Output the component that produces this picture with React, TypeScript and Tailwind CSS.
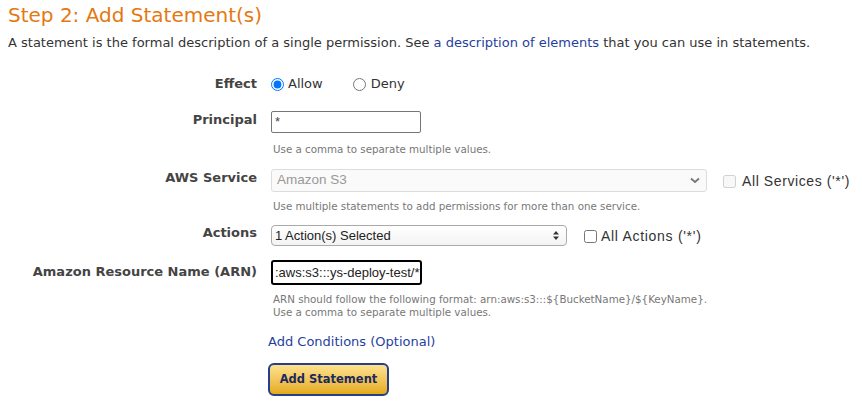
import React from "react";

const verdana = { fontFamily: '"DejaVu Sans", Verdana, sans-serif' };
const arial = { fontFamily: '"Liberation Sans", Arial, sans-serif' };

function Label({ children, pt = "" }: { children: React.ReactNode; pt?: string }) {
  return (
    <div className={`w-[249px] shrink-0 text-right text-[13px] leading-[16px] font-bold text-[#444] ${pt}`}>
      {children}
    </div>
  );
}

function Help({ children, mt }: { children: React.ReactNode; mt: string }) {
  return <div className={`pl-[265px] text-[10.3px] leading-[13px] text-[#777] ${mt}`}>{children}</div>;
}

export default function App() {
  return (
    <div className="bg-white w-[862px] h-[406px] overflow-hidden pl-[8px] text-[#333]" style={verdana}>
      {/* Header */}
      <h2 className="mt-[3px] text-[20px] leading-[24px] text-[#e47911]">Step 2: Add Statement(s)</h2>
      <p className="mt-[8px] text-[13px] leading-[16px] whitespace-nowrap">
        A statement is the formal description of a single permission. See{" "}
        <a className="text-[#1f3fa0]">a description of elements</a> that you can use in statements.
      </p>

      {/* Effect */}
      <div className="mt-[23px] flex items-center h-[20px]">
        <Label>Effect</Label>
        <div className="ml-[14px] flex items-center text-[13px]">
          <input type="radio" name="effect" defaultChecked className="m-0 w-[13px] h-[13px]" />
          <span className="ml-[4px]">Allow</span>
          <input type="radio" name="effect" className="m-0 ml-[30px] w-[13px] h-[13px]" />
          <span className="ml-[5px]">Deny</span>
        </div>
      </div>

      {/* Principal */}
      <div className="mt-[17px] flex items-start">
        <Label pt="pt-[1px]">Principal</Label>
        <div className="ml-[14px] w-[150px] h-[22px] border border-[#767676] rounded-[2px] px-[3px] text-[13px] leading-[20px] text-[#444]" style={arial}>
          *
        </div>
      </div>
      <Help mt="mt-[10px]">Use a comma to separate multiple values.</Help>

      {/* AWS Service */}
      <div className="mt-[13px] flex items-start">
        <Label pt="pt-[1px]">AWS Service</Label>
        <div className="ml-[14px] w-[436px] h-[23px] border border-[#ddd] rounded-[3px] bg-[#fafafa] pl-[5px] pr-[6px] flex items-center justify-between text-[13.5px] text-[#999]" style={arial}>
          <span>Amazon S3</span>
          <svg width="10" height="7" viewBox="0 0 10 7">
            <path d="M1 1.5 L5 5 L9 1.5" fill="none" stroke="#777" strokeWidth="1.8" />
          </svg>
        </div>
        <div className="ml-[16px] flex items-center h-[24px] text-[14px] tracking-[0.6px] text-[#333]" style={arial}>
          <input type="checkbox" disabled className="m-0 w-[13px] h-[13px]" />
          <span className="ml-[6px] whitespace-nowrap">All Services ('*')</span>
        </div>
      </div>
      <Help mt="mt-[7px]">Use multiple statements to add permissions for more than one service.</Help>

      {/* Actions */}
      <div className="mt-[12px] flex items-start">
        <Label>Actions</Label>
        <div className="ml-[14px] w-[296px] h-[21px] border border-[#aaa] rounded-[4px] bg-gradient-to-b from-white to-[#f3f3f3] pl-[3px] pr-[7px] flex items-center justify-between text-[13px] text-[#222]" style={arial}>
          <span>1 Action(s) Selected</span>
          <svg width="6" height="9" viewBox="0 0 6 9">
            <path d="M0 3.5 L3 0 L6 3.5 Z M0 5.5 L3 9 L6 5.5 Z" fill="#333" />
          </svg>
        </div>
        <div className="ml-[17px] flex items-center h-[22px] text-[14px] tracking-[0.7px] text-[#333]" style={arial}>
          <input type="checkbox" className="m-0 w-[13px] h-[13px]" />
          <span className="ml-[4px] whitespace-nowrap">All Actions ('*')</span>
        </div>
      </div>

      {/* ARN */}
      <div className="mt-[13px] flex items-start">
        <Label pt="pt-[4px]">Amazon Resource Name (ARN)</Label>
        <div className="ml-[14px] w-[151px] h-[25px] border-2 border-black rounded-[3px] pl-[2px] text-[13px] leading-[21px] text-[#222] whitespace-nowrap overflow-hidden" style={arial}>
          :aws:s3:::ys-deploy-test/*
        </div>
      </div>
      <Help mt="mt-[8px]">
        ARN should follow the following format: arn:aws:s3:::${"{BucketName}"}/${"{KeyName}"}.
        <br />
        Use a comma to separate multiple values.
      </Help>

      {/* Conditions + submit */}
      <div className="mt-[15px] pl-[260px] text-[13px] leading-[16px]">
        <a className="text-[#1f3fa0]">Add Conditions (Optional)</a>
      </div>
      <div className="mt-[13px] pl-[260px]">
        <button className="w-[121px] h-[33px] border-2 border-[#233f8e] rounded-[6px] bg-gradient-to-b from-[#fde28c] to-[#e6aa0e] text-[11.5px] font-bold text-[#1b2a5c]">
          Add Statement
        </button>
      </div>
    </div>
  );
}
